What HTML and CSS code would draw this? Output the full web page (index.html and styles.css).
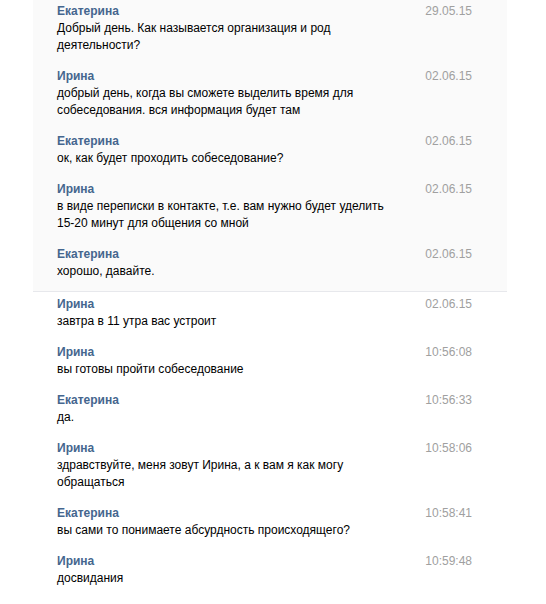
FILE: index.html
```html
<!DOCTYPE html>
<html lang="ru">
<head>
<meta charset="utf-8">
<link rel="stylesheet" href="styles.css">
</head>
<body>
<div class="page">
  <div class="section section-old">
    <div class="msg">
      <div class="head"><span class="name">Екатерина</span><span class="date">29.05.15</span></div>
      <div class="text">Добрый день. Как называется организация и род<br>деятельности?</div>
    </div>
    <div class="msg">
      <div class="head"><span class="name">Ирина</span><span class="date">02.06.15</span></div>
      <div class="text">добрый день, когда вы сможете выделить время для<br>собеседования. вся информация будет там</div>
    </div>
    <div class="msg">
      <div class="head"><span class="name">Екатерина</span><span class="date">02.06.15</span></div>
      <div class="text">ок, как будет проходить собеседование?</div>
    </div>
    <div class="msg">
      <div class="head"><span class="name">Ирина</span><span class="date">02.06.15</span></div>
      <div class="text">в виде переписки в контакте, т.е. вам нужно будет уделить<br>15-20 минут для общения со мной</div>
    </div>
    <div class="msg">
      <div class="head"><span class="name">Екатерина</span><span class="date">02.06.15</span></div>
      <div class="text">хорошо, давайте.</div>
    </div>
  </div>
  <div class="section section-new">
    <div class="msg">
      <div class="head"><span class="name">Ирина</span><span class="date">02.06.15</span></div>
      <div class="text">завтра в 11 утра вас устроит</div>
    </div>
    <div class="msg">
      <div class="head"><span class="name">Ирина</span><span class="date">10:56:08</span></div>
      <div class="text">вы готовы пройти собеседование</div>
    </div>
    <div class="msg">
      <div class="head"><span class="name">Екатерина</span><span class="date">10:56:33</span></div>
      <div class="text">да.</div>
    </div>
    <div class="msg">
      <div class="head"><span class="name">Ирина</span><span class="date">10:58:06</span></div>
      <div class="text">здравствуйте, меня зовут Ирина, а к вам я как могу<br>обращаться</div>
    </div>
    <div class="msg">
      <div class="head"><span class="name">Екатерина</span><span class="date">10:58:41</span></div>
      <div class="text">вы сами то понимаете абсурдность происходящего?</div>
    </div>
    <div class="msg">
      <div class="head"><span class="name">Ирина</span><span class="date">10:59:48</span></div>
      <div class="text">досвидания</div>
    </div>
  </div>
</div>
</body>
</html>
```

FILE: styles.css
```css
html, body {
  margin: 0;
  padding: 0;
  background: #ffffff;
}

body {
  font-family: "Liberation Sans", Arial, sans-serif;
  font-size: 12px;
  color: #000;
}

.page {
  width: 546px;
  height: 604px;
  overflow: hidden;
}

.section {
  margin: 0 39px 0 33px;
}

.section-old {
  background: #fafafa;
  border-bottom: 1px solid #e7e8ec;
}

.section-new {
  padding-top: 1px;
}

.msg {
  padding: 2px 0 11px 24px;
}

.head {
  display: flex;
  justify-content: space-between;
  line-height: 18px;
  padding-right: 35px;
}

.name {
  font-weight: bold;
  color: #45668e;
}

.date {
  color: #a0a0a0;
}

.text {
  line-height: 17px;
}
```
